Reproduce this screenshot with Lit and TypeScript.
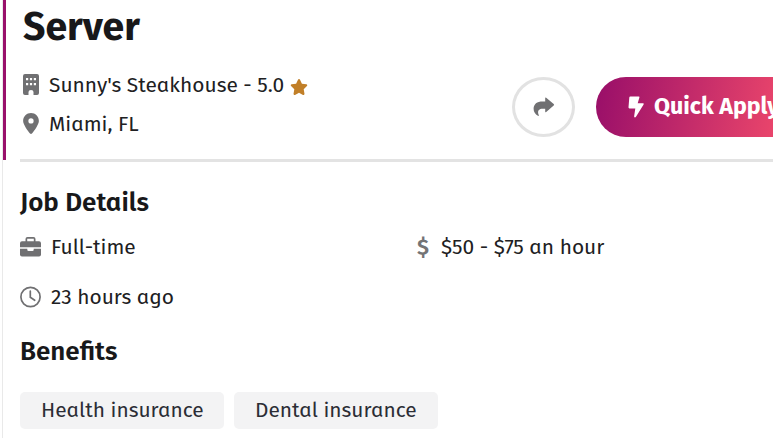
import { LitElement, html, css } from "lit";
import { customElement } from "lit/decorators.js";

const building = html`<svg class="icon building" viewBox="0 0 16 21">
  <path fill-rule="evenodd" d="M2 0H14Q16 0 16 2V19Q16 21 14 21H10.500V18Q10.500 16 8 16T5.500 18V21H2Q0 21 0 19V2Q0 0 2 0Z
  M3 4V6.200H5.200V4Z M6.900 4V6.200H9.100V4Z M10.800 4V6.200H13V4Z M3 9V11.200H5.200V9Z M6.900 9V11.200H9.100V9Z M10.800 9V11.200H13V9Z"/></svg>`;
const pin = html`<svg class="icon pin" viewBox="0 0 384 512">
  <path d="M215.700 499.200C267 435 384 279.400 384 192C384 86 298 0 192 0S0 86 0 192c0 87.400 117 243 168.300 307.200c12.300 15.300 35.100 15.300 47.400 0zM192 128a64 64 0 1 1 0 128 64 64 0 1 1 0-128z"/></svg>`;
const star = html`<svg class="star" viewBox="0 0 576 512">
  <path d="M316.900 18C311.600 7 300.400 0 288.100 0s-23.400 7-28.800 18L195 150.300 51.400 171.500c-12 1.800-22 10.200-25.700 21.700s-.7 24.200 7.900 32.700L137.800 329 113.200 474.700c-2 12 3 24.200 12.900 31.300s23 8 33.800 2.300l128.300-68.500 128.300 68.500c10.800 5.700 23.900 4.900 33.800-2.300s14.900-19.300 12.900-31.300L438.500 329 542.700 225.900c8.600-8.500 11.700-21.200 7.900-32.700s-13.700-19.900-25.700-21.700L381.200 150.300 316.900 18z"/></svg>`;
const share = html`<svg class="icon share" viewBox="0 0 22 20">
  <path d="M12.200 1.100Q12.200 0 13.200.8L20.700 7Q21.600 7.800 20.700 8.600L13.200 15Q12.200 15.800 12.200 14.600V11.800H9.500C6.300 11.800 4.700 13.400 5.200 16.400L5.800 18.300Q5.900 19.300 4.900 18.800C2.200 17.200.6 14.800.6 11.700C.6 6.900 4 4.400 9.500 4.400H12.200Z"/></svg>`;
const bolt = html`<svg class="bolt" viewBox="0 0 16 22">
  <path d="M2.300.5H10.700Q11.800.5 11.400 1.500L9.700 7.200H14.900Q16.300 7.300 15.600 8.500L8 20.800Q6.700 22.100 6.100 20.500L7.300 12.400H1.500Q.4 12.300.5 11.200L1.300 1.400Q1.400.5 2.300.5Z"/></svg>`;
const briefcase = html`<svg class="icon wide" viewBox="0 0 22 20">
  <path fill-rule="evenodd" d="M5.500 4.200V2Q5.500 0 7.500 0H13.500Q15.500 0 15.500 2V4.200H19Q21 4.200 21 6.200V10.300H0V6.200Q0 4.200 2 4.200Z M7.200 1.700V4.200H13.800V1.700Z
  M0 11.700H7.300V12.800Q7.300 14 8.500 14H12.500Q13.700 14 13.700 12.800V11.700H21V17.500Q21 19.500 19 19.500H2Q0 19.500 0 17.500Z"/></svg>`;
const clock = html`<svg class="icon wide clock" viewBox="0 0 22 22">
  <circle cx="10.500" cy="11" r="9.600"/><path d="M10.300 5.200V11.300L14.700 14.300"/></svg>`;

@customElement("app-root")
export class AppRoot extends LitElement {
  static styles = css`
    :host { display: block; height: 438px; overflow: hidden; background: #fff; color: #202022;
      font-family: "Fira Sans", "Noto Sans", sans-serif; font-feature-settings: "ss04";
      font-size: 20.900px; line-height: 30px; }
    * { box-sizing: border-box; }
    svg { display: block; flex: none; overflow: visible; }
    span, h1, h2 { white-space: nowrap; }
    .page { position: relative; width: 773px; height: 438px; overflow: hidden; padding-left: 20px;
      display: flex; flex-direction: column; }
    .edge { position: absolute; left: 2px; top: 0; width: 1px; height: 438px; background: #e9e9e9; }
    .accent { position: absolute; left: 3px; top: 0; width: 3px; height: 160px; background: #99116b; }
    header { height: 162px; flex: none; border-bottom: 3px solid #e3e3e3; display: flex; }
    .title { width: 492px; flex: none; padding-left: 3px; }
    h1 { margin: 0; height: 65px; font-size: 39.200px; line-height: 53px; font-weight: 700; color: #18181a; }
    .line { display: flex; align-items: center; height: 39px; }
    .building, .pin { width: 16px; height: 21px; margin-right: 10px; }
    .icon { fill: #707072; }
    .star { width: 18px; height: 16px; fill: #c17f28; margin: 4px 0 0 6px; }
    .actions { display: flex; gap: 21px; padding-top: 77px; }
    .round { flex: none; width: 63px; height: 60px; border: 3px solid #e2e2e2; border-radius: 50%;
      background: #fff; padding: 0; display: flex; align-items: center; justify-content: center; }
    .share { width: 22px; height: 20px; }
    .apply { flex: none; width: 210px; height: 60px; border: 0; border-radius: 30px; padding: 0 0 0 32px;
      display: flex; align-items: center; gap: 10px; color: #fff;
      font-family: inherit; font-size: 23.200px; font-weight: 700; line-height: 30px;
      background: linear-gradient(100deg, #9b1069 3%, #e8446b 84%); }
    .apply span { padding-bottom: 2px; }
    .bolt { width: 16px; height: 22px; fill: #fff; }
    h2 { margin: 0; font-size: 26px; line-height: 34px; font-weight: 600; color: #18181a; }
    .details { padding-top: 24px; }
    .grid { display: grid; grid-template-columns: 397px 1fr; grid-template-rows: 50px 50px; margin: 2px 0 13px; }
    .cell { display: flex; align-items: center; }
    .wide { width: 22px; height: 20px; margin-right: 9px; }
    .clock { height: 22px; fill: none; stroke: #707072; stroke-width: 1.700; stroke-linecap: round; }
    .dollar { color: #747476; font-size: 22px; margin-right: 10px; font-weight: 600; width: 14px; }
    .chips { display: flex; gap: 10px; margin-top: 23px; }
    .chip { width: 204px; height: 37px; border-radius: 5px; background: #f3f3f4; color: #2b2d35;
      display: flex; align-items: center; padding: 0 0 2px 21px; }
  `;

  render() {
    return html`<main class="page">
      <div class="edge"></div><div class="accent"></div>
      <header>
        <div class="title">
          <h1>Server</h1>
          <div class="line">${building}<span>Sunny's Steakhouse - 5.0</span>${star}</div>
          <div class="line">${pin}<span>Miami, FL</span></div>
        </div>
        <div class="actions">
          <button class="round" aria-label="Share">${share}</button>
          <button class="apply">${bolt}<span>Quick Apply</span></button>
        </div>
      </header>
      <section class="details">
        <h2>Job Details</h2>
        <div class="grid">
          <div class="cell">${briefcase}<span>Full-time</span></div>
          <div class="cell"><span class="dollar">$</span><span>$50 - $75 an hour</span></div>
          <div class="cell">${clock}<span>23 hours ago</span></div>
        </div>
      </section>
      <section>
        <h2>Benefits</h2>
        <div class="chips">
          <div class="chip"><span>Health insurance</span></div>
          <div class="chip"><span>Dental insurance</span></div>
        </div>
      </section>
    </main>`;
  }
}
